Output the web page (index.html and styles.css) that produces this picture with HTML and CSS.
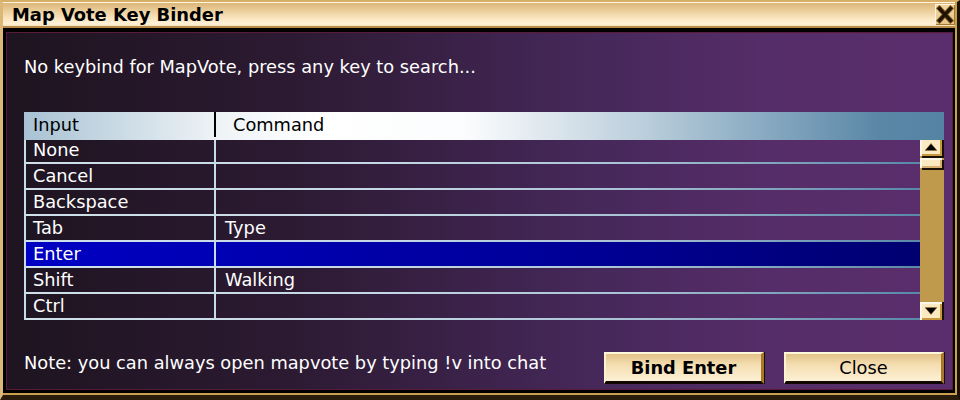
FILE: index.html
```html
<!DOCTYPE html>
<html>
<head>
<meta charset="utf-8">
<link rel="stylesheet" href="styles.css">
</head>
<body>
<div class="window">
  <div class="frame">
    <div class="titlebar">
      <span class="title">Map Vote Key Binder</span>
      <div class="xbtn">
        <svg width="20" height="21" viewBox="0 0 20 21">
          <path d="M4.5 4.5 L15.5 16.5 M15.5 4.5 L4.5 16.5" stroke="#7a5418" stroke-width="5" stroke-linecap="square"/>
          <path d="M4.5 4.5 L15.5 16.5 M15.5 4.5 L4.5 16.5" stroke="#1e1204" stroke-width="3.2" stroke-linecap="square"/>
        </svg>
      </div>
    </div>
    <div class="content">
      <p class="prompt">No keybind for MapVote, press any key to search...</p>
      <div class="table">
        <div class="thead">
          <div class="hc1">Input</div>
          <div class="hc2">Command</div>
        </div>
        <div class="tbody">
          <div class="rows">
            <div class="row"><div class="c1">None</div><div class="c2"></div></div>
            <div class="row"><div class="c1">Cancel</div><div class="c2"></div></div>
            <div class="row"><div class="c1">Backspace</div><div class="c2"></div></div>
            <div class="row"><div class="c1">Tab</div><div class="c2">Type</div></div>
            <div class="row sel"><div class="c1">Enter</div><div class="c2"></div></div>
            <div class="row"><div class="c1">Shift</div><div class="c2">Walking</div></div>
            <div class="row"><div class="c1">Ctrl</div><div class="c2"></div></div>
          </div>
          <div class="scroll">
            <div class="sbtn">
              <svg width="12" height="8" viewBox="0 0 12 8"><polygon points="0,7.5 6,0.5 12,7.5" fill="#000" stroke="#a07828" stroke-width="0.6"/></svg>
            </div>
            <div class="thumb"></div>
            <div class="sbtn down">
              <svg width="12" height="8" viewBox="0 0 12 8"><polygon points="0,0.5 12,0.5 6,7.5" fill="#000" stroke="#a07828" stroke-width="0.6"/></svg>
            </div>
          </div>
        </div>
      </div>
      <div class="footer">
        <p class="note">Note: you can always open mapvote by typing !v into chat</p>
        <button class="btn bold">Bind Enter</button>
        <button class="btn">Close</button>
      </div>
    </div>
  </div>
</div>
</body>
</html>
```
FILE: styles.css
```css
* { box-sizing: border-box; }
body { margin: 0; background: #000; }

.window {
  width: 960px;
  height: 400px;
  border-left: 3px solid #dcb878;
  border-top: 2px solid #d6ae68;
  border-right: 3px solid #1a1005;
  border-bottom: 5px solid #2a1c0c;
  font-family: "DejaVu Sans", Verdana, sans-serif;
  font-size: 17.8px;
}

.frame {
  height: 100%;
  display: flex;
  flex-direction: column;
  background: #000;
  border-right: 2px solid #c8a050;
  border-bottom: 2px solid #c8a050;
}

.titlebar {
  height: 26px;
  flex: none;
  display: flex;
  align-items: center;
  justify-content: space-between;
  padding-left: 9px;
  border-top: 1px solid #fff4dc;
  border-bottom: 2px solid #b88c48;
  background: linear-gradient(to bottom, #dcb67a 0%, #e4c48c 20%, #f0d6a8 45%, #fae6c2 70%, #fff0d6 90%, #f6e2bc 100%);
}

.title {
  font-weight: bold;
  font-size: 17.9px;
  line-height: 22px;
  color: #000;
}

.xbtn {
  width: 20px;
  height: 21px;
  background: linear-gradient(#f0d8a4, #e4c488);
  box-shadow: inset 1px 1px #fff4dc, inset -1px -1px #a07830;
  display: flex;
}

.content {
  flex: 1;
  margin: 4px 2px 3px 3px;
  border: 1px solid #5a1a3a;
  padding: 22px 8px 0 17px;
  display: flex;
  flex-direction: column;
  color: #fff;
  background: linear-gradient(to right, #1e1420 0%, #2c1a32 30%, #46285a 62%, #552d68 80%, #5a2e6c 100%);
}

.prompt {
  margin: 0;
  line-height: 24px;
}

.table {
  margin-top: 33px;
}

.thead {
  height: 28px;
  display: flex;
  align-items: flex-start;
  color: #000;
  position: relative;
  z-index: 1;
  background: linear-gradient(to right, #a8c2d4 0%, #eef3f6 21%, #ffffff 32%, #fbfcfd 48%, #bccfdc 67%, #7ba0ba 84%, #5a87a6 93%, #5583a3 100%);
}

.hc1 {
  width: 192px;
  height: 25px;
  padding-left: 9px;
  line-height: 26px;
  border-right: 2px solid #000;
}

.hc2 {
  padding-left: 17px;
  line-height: 26px;
}

.tbody {
  display: flex;
  margin-top: -2px;
  height: 182px;
}

.rows {
  flex: 1;
  border-left: 2px solid #c8dce8;
}

.row {
  height: 26px;
  display: flex;
  padding-bottom: 2px;
  background: linear-gradient(to right, #cfe0ea 0%, #c4d8e4 40%, #a8c2d4 68%, #7ea2bc 85%, #5a88a8 100%) bottom / 100% 2px no-repeat;
}

.row.sel {
  background:
    linear-gradient(to right, #cfe0ea 0%, #c4d8e4 40%, #a8c2d4 68%, #7ea2bc 85%, #5a88a8 100%) bottom / 100% 2px no-repeat,
    linear-gradient(to right, #0000c4 0%, #00009c 55%, #000070 100%) top / 100% 24px no-repeat;
}

.c1 {
  width: 190px;
  padding-left: 7px;
  line-height: 23px;
  border-right: 2px solid #c8dce8;
}

.c2 {
  flex: 1;
  padding-left: 9px;
  line-height: 23px;
}

.scroll {
  width: 24px;
  display: flex;
  flex-direction: column;
  background: #c09a4c;
}

.sbtn {
  width: 22px;
  height: 18px;
  display: flex;
  align-items: center;
  justify-content: center;
  background: #fbe9c2;
  box-shadow: inset 2px 2px #fff8e6, inset -2px -2px #c8983c, 2px 2px 0 #1a1004;
}

.sbtn.down {
  margin-top: auto;
  box-shadow: inset 2px 2px #fff8e6, inset -2px -2px #c8983c, 2px 0 0 #1a1004;
}

.thumb {
  width: 22px;
  height: 10px;
  margin-top: 2px;
  background: #fbe9c2;
  box-shadow: inset 2px 2px #fff8e6, inset -2px -2px #d8b070, 2px 2px 0 #1a1004;
}

.footer {
  display: flex;
  align-items: flex-start;
  margin-top: 32px;
}

.note {
  flex: 1;
  margin: -1px 0 0;
  line-height: 24px;
}

.btn {
  width: 160px;
  height: 32px;
  margin-left: 20px;
  padding: 0;
  font-family: inherit;
  font-size: 17.8px;
  color: #000;
  border-top: 2px solid #fff6dc;
  border-left: 2px solid #fff2d0;
  border-right: 3px solid #a87828;
  border-bottom: 3px solid #100800;
  box-shadow: 1px 0 0 #1a1004;
  background: linear-gradient(to bottom, #e2c286 0%, #f4deb2 40%, #fdf0d4 100%);
}

.btn.bold {
  font-weight: bold;
}
```
